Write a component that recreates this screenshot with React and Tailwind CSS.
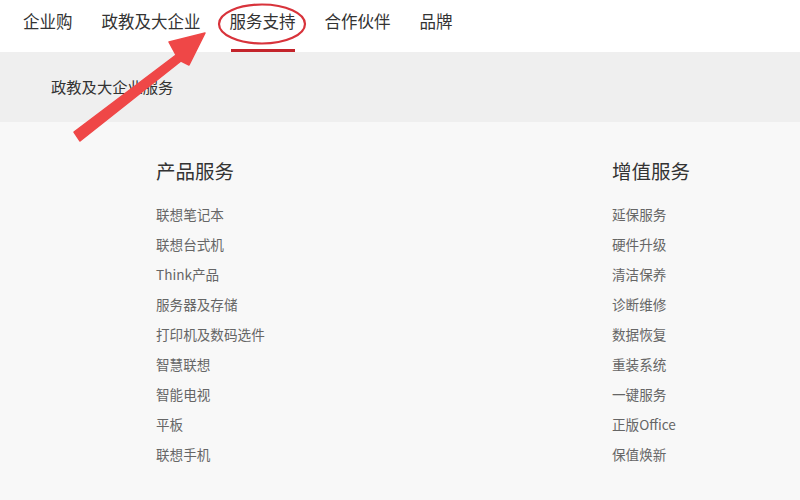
export default function App() {
  const nav = ["企业购", "政教及大企业", "服务支持", "合作伙伴", "品牌"];
  const left = ["联想笔记本", "联想台式机", "Think产品", "服务器及存储", "打印机及数码选件", "智慧联想", "智能电视", "平板", "联想手机"];
  const right = ["延保服务", "硬件升级", "清洁保养", "诊断维修", "数据恢复", "重装系统", "一键服务", "正版Office", "保值焕新"];
  const font = { fontFamily: '"Noto Sans CJK SC", "Noto Sans", sans-serif' };
  return (
    <div className="relative w-[800px] h-[500px] overflow-hidden bg-[#f8f8f8]" style={font}>
      <div className="h-[52px] bg-white flex items-start pl-[23px] gap-[29px]">
        {nav.map((n, i) => (
          <div key={n} className="relative h-[52px] flex items-start pt-[9px]">
            <span className="text-[16.5px] leading-[24px] text-[#333]">{n}</span>
            {i === 2 && <div className="absolute left-[1px] right-[1px] bottom-0 h-[3px] bg-[#c4242b]" />}
          </div>
        ))}
      </div>
      <div className="h-[70px] bg-[#efefef] pl-[51px] pt-[22px]">
        <span className="text-[15.3px] leading-[22px] text-[#333]">政教及大企业服务</span>
      </div>
      <div className="flex pt-[35px]">
        <div className="ml-[156px] w-[456px]">
          <div className="text-[19.5px] leading-[28px] text-[#333] mb-[19px]">产品服务</div>
          <div className="flex flex-col">
            {left.map((t) => (
              <div key={t} className="h-[30px] text-[13.6px] leading-[20px] text-[#666]">{t}</div>
            ))}
          </div>
        </div>
        <div>
          <div className="text-[19.5px] leading-[28px] text-[#333] mb-[19px]">增值服务</div>
          <div className="flex flex-col">
            {right.map((t) => (
              <div key={t} className="h-[30px] text-[13.6px] leading-[20px] text-[#666]">{t}</div>
            ))}
          </div>
        </div>
      </div>
      <svg className="absolute left-0 top-0 pointer-events-none" width="800" height="500">
        <ellipse cx="262" cy="24" rx="43" ry="19.5" fill="none" stroke="#d8333b" strokeWidth="2.2" />
        <path d="M74 132 L176 55 L169 42 L205 33 L189 65 L181 61 L80 141 Z" fill="#ef4747" strokeLinejoin="round" stroke="#ef4747" strokeWidth="1.5" />
      </svg>
    </div>
  );
}
